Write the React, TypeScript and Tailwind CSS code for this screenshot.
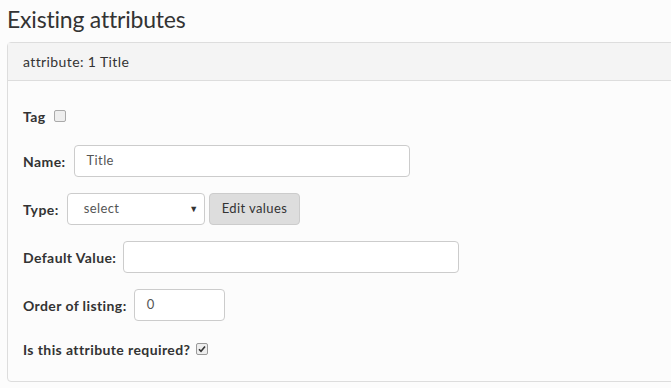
export default function App() {
  return (
    <div
      className="min-h-screen w-[671px] overflow-hidden bg-[#fcfcfc] text-[#333] tracking-[0.4px]"
      style={{ fontFamily: 'Lato, "Open Sans", sans-serif' }}
    >
      <h2 className="pl-[7px] pt-[3px] text-[23px] leading-[32px] font-normal tracking-[-0.2px]">Existing attributes</h2>
      <div className="ml-[7px] mt-[7px] w-[700px] rounded-[4px] border border-[#ddd] bg-[#fcfcfc]">
        <div className="h-[38px] flex items-center pl-[15px] border-b border-[#ddd] bg-[#f4f4f4] text-[14px]">
          attribute: 1 Title
        </div>
        <div className="pl-[15px] pt-[23px] pb-[20px] text-[14px]">
          <div className="flex items-center h-[24px]">
            <span className="font-bold">Tag</span>
            <span className="ml-[8px] w-[12px] h-[12px] rounded-[2px] border border-[#aaa] bg-[#eee]" />
          </div>
          <div className="flex items-center mt-[17px]">
            <span className="font-bold">Name:</span>
            <div className="ml-[8px] w-[336px] h-[32px] rounded-[4px] border border-[#ccc] bg-white flex items-center pl-[12px] text-[13px] text-[#555]">
              Title
            </div>
          </div>
          <div className="flex items-center mt-[16px]">
            <span className="font-bold">Type:</span>
            <div className="ml-[8px] w-[138px] h-[32px] rounded-[4px] border border-[#ccc] bg-white flex items-center pl-[16px] pr-[5px] text-[13px] text-[#555]">
              <span className="flex-1">select</span>
              <span className="text-[9px] text-[#333]">▼</span>
            </div>
            <div className="ml-[4px] h-[32px] px-[12px] rounded-[4px] border border-[#ccc] bg-[#ddd] flex items-center text-[13px] text-[#333]">
              Edit values
            </div>
          </div>
          <div className="flex items-center mt-[16px]">
            <span className="font-bold">Default Value:</span>
            <div className="ml-[7px] w-[336px] h-[32px] rounded-[4px] border border-[#ccc] bg-white" />
          </div>
          <div className="flex items-center mt-[16px]">
            <span className="font-bold">Order of listing:</span>
            <div className="ml-[7px] w-[91px] h-[32px] rounded-[4px] border border-[#ccc] bg-white flex items-center pl-[12px] text-[13px] text-[#555]">
              0
            </div>
          </div>
          <div className="flex items-center mt-[16px] h-[24px]">
            <span className="font-bold">Is this attribute required?</span>
            <span className="ml-[6px] w-[12px] h-[12px] rounded-[2px] border border-[#999] bg-[#eee] flex items-center justify-center">
              <svg width="8" height="8" viewBox="0 0 8 8">
                <path d="M1 4.2 L3 6.2 L7 1.5" fill="none" stroke="#333" strokeWidth="1.6" />
              </svg>
            </span>
          </div>
        </div>
      </div>
    </div>
  )
}
